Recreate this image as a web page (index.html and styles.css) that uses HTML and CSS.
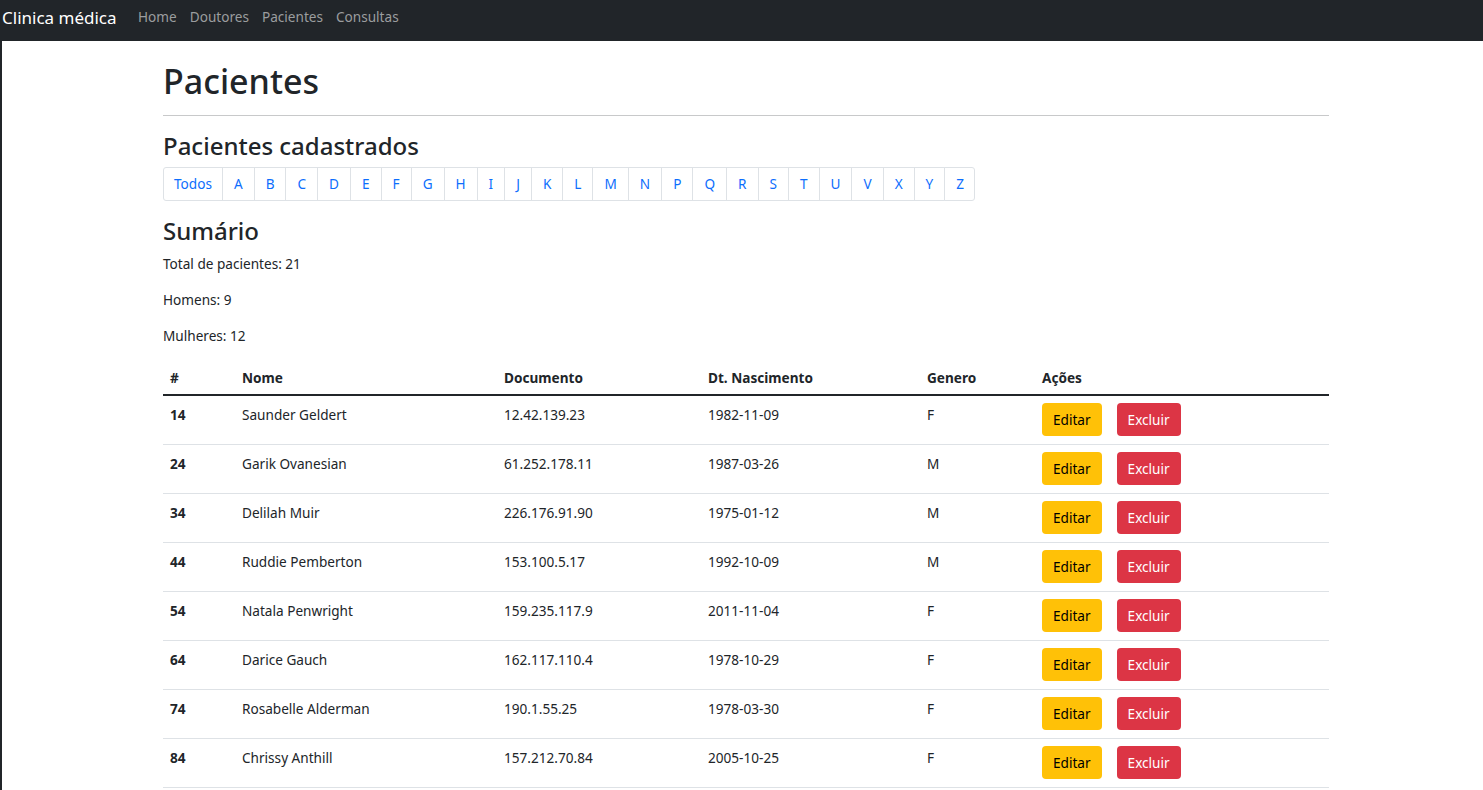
FILE: index.html
```html
<!DOCTYPE html>
<html lang="pt">
<head>
<meta charset="utf-8">
<title>Clinica médica</title>
<link rel="stylesheet" href="styles.css">
</head>
<body>
<nav class="navbar">
  <a class="brand" href="#">Clinica médica</a>
  <ul class="nav">
    <li><a href="#">Home</a></li>
    <li><a href="#">Doutores</a></li>
    <li><a href="#">Pacientes</a></li>
    <li><a href="#">Consultas</a></li>
  </ul>
</nav>
<main class="page">
  <div class="container">
    <h1 class="title">Pacientes</h1>
    <hr class="rule">
    <h3 class="section">Pacientes cadastrados</h3>
    <ul class="pagination">
      <li><a href="#">Todos</a></li>
      <li><a href="#">A</a></li>
      <li><a href="#">B</a></li>
      <li><a href="#">C</a></li>
      <li><a href="#">D</a></li>
      <li><a href="#">E</a></li>
      <li><a href="#">F</a></li>
      <li><a href="#">G</a></li>
      <li><a href="#">H</a></li>
      <li><a href="#">I</a></li>
      <li><a href="#">J</a></li>
      <li><a href="#">K</a></li>
      <li><a href="#">L</a></li>
      <li><a href="#">M</a></li>
      <li><a href="#">N</a></li>
      <li><a href="#">P</a></li>
      <li><a href="#">Q</a></li>
      <li><a href="#">R</a></li>
      <li><a href="#">S</a></li>
      <li><a href="#">T</a></li>
      <li><a href="#">U</a></li>
      <li><a href="#">V</a></li>
      <li><a href="#">X</a></li>
      <li><a href="#">Y</a></li>
      <li><a href="#">Z</a></li>
    </ul>
    <h3 class="section summary-title">Sumário</h3>
    <p class="stat">Total de pacientes: 21</p>
    <p class="stat">Homens: 9</p>
    <p class="stat">Mulheres: 12</p>
    <table class="table">
      <colgroup>
        <col class="c-id"><col class="c-name"><col class="c-doc"><col class="c-date"><col class="c-gen"><col class="c-act">
      </colgroup>
      <thead>
        <tr><th>#</th><th>Nome</th><th>Documento</th><th>Dt. Nascimento</th><th>Genero</th><th>Ações</th></tr>
      </thead>
      <tbody>
        <tr><th>14</th><td>Saunder Geldert</td><td>12.42.139.23</td><td>1982-11-09</td><td>F</td><td><div class="actions"><a class="btn btn-warning" href="#">Editar</a><a class="btn btn-danger" href="#">Excluir</a></div></td></tr>
        <tr><th>24</th><td>Garik Ovanesian</td><td>61.252.178.11</td><td>1987-03-26</td><td>M</td><td><div class="actions"><a class="btn btn-warning" href="#">Editar</a><a class="btn btn-danger" href="#">Excluir</a></div></td></tr>
        <tr><th>34</th><td>Delilah Muir</td><td>226.176.91.90</td><td>1975-01-12</td><td>M</td><td><div class="actions"><a class="btn btn-warning" href="#">Editar</a><a class="btn btn-danger" href="#">Excluir</a></div></td></tr>
        <tr><th>44</th><td>Ruddie Pemberton</td><td>153.100.5.17</td><td>1992-10-09</td><td>M</td><td><div class="actions"><a class="btn btn-warning" href="#">Editar</a><a class="btn btn-danger" href="#">Excluir</a></div></td></tr>
        <tr><th>54</th><td>Natala Penwright</td><td>159.235.117.9</td><td>2011-11-04</td><td>F</td><td><div class="actions"><a class="btn btn-warning" href="#">Editar</a><a class="btn btn-danger" href="#">Excluir</a></div></td></tr>
        <tr><th>64</th><td>Darice Gauch</td><td>162.117.110.4</td><td>1978-10-29</td><td>F</td><td><div class="actions"><a class="btn btn-warning" href="#">Editar</a><a class="btn btn-danger" href="#">Excluir</a></div></td></tr>
        <tr><th>74</th><td>Rosabelle Alderman</td><td>190.1.55.25</td><td>1978-03-30</td><td>F</td><td><div class="actions"><a class="btn btn-warning" href="#">Editar</a><a class="btn btn-danger" href="#">Excluir</a></div></td></tr>
        <tr><th>84</th><td>Chrissy Anthill</td><td>157.212.70.84</td><td>2005-10-25</td><td>F</td><td><div class="actions"><a class="btn btn-warning" href="#">Editar</a><a class="btn btn-danger" href="#">Excluir</a></div></td></tr>
      </tbody>
    </table>
  </div>
</main>
</body>
</html>
```

FILE: styles.css
```css
html, body {
  margin: 0;
  padding: 0;
  overflow: hidden;
}

body {
  font-family: "Noto Sans", "Open Sans", sans-serif;
  font-size: 13.6px;
  line-height: 1.5;
  color: #212529;
  background: #fff;
}

a {
  text-decoration: none;
}

/* Navbar */
.navbar {
  height: 41px;
  background: #212529;
  display: flex;
  align-items: center;
  padding-left: 2px;
  padding-bottom: 6px;
  box-sizing: border-box;
}

.brand {
  color: #fff;
  font-size: 17px;
  margin-right: 15px;
}

.nav {
  list-style: none;
  display: flex;
  margin: 0;
  padding: 0;
}

.nav a {
  display: block;
  padding: 0 6.5px;
  color: #9b9d9f;
  font-size: 13.6px;
}

/* Page */
.page {
  border-left: 2px solid #212529;
  min-height: 749px;
}

.container {
  width: 1166px;
  margin-left: 161px;
}

.title {
  margin: 0;
  padding-top: 20px;
  font-size: 34px;
  font-weight: 500;
  line-height: 1.2;
}

.rule {
  margin: 13px 0 16px;
  border: 0;
  border-top: 1px solid #c8c9ca;
}

.section {
  margin: 0 0 6px;
  font-size: 24px;
  font-weight: 500;
  line-height: 1.2;
}

.summary-title {
  margin-top: 16px;
  margin-bottom: 8px;
}

/* Pagination */
.pagination {
  list-style: none;
  display: flex;
  margin: 0;
  padding: 0;
}

.pagination a {
  display: block;
  height: 34px;
  box-sizing: border-box;
  padding: 0 11px;
  line-height: 32px;
  border: 1px solid #dee2e6;
  margin-left: -1px;
  color: #0d6efd;
  background: #fff;
}

.pagination li:first-child a {
  margin-left: 0;
  padding: 0 10px;
  border-radius: 3px 0 0 3px;
}

.pagination li:last-child a {
  padding-right: 10px;
  border-radius: 0 3px 3px 0;
}

/* Summary */
.stat {
  margin: 0 0 14px;
  line-height: 21.6px;
}

/* Table */
.table {
  width: 100%;
  border-collapse: collapse;
  margin-top: 12px;
}

.c-id { width: 72px; }
.c-name { width: 262px; }
.c-doc { width: 204px; }
.c-date { width: 219px; }
.c-gen { width: 115px; }

.table th,
.table td {
  text-align: left;
  vertical-align: top;
  padding: 7px 7px;
  line-height: 21.6px;
}

.table thead th {
  font-weight: 700;
  padding-bottom: 5px;
  border-bottom: 2px solid #212529;
}

.table tbody th {
  font-weight: 700;
}

.table tbody td,
.table tbody th {
  border-bottom: 1px solid #dee2e6;
  padding-top: 8px;
  padding-bottom: 8px;
}

.actions {
  display: flex;
  gap: 15px;
}

.btn {
  display: inline-block;
  height: 33px;
  line-height: 33px;
  padding: 0 11px;
  border-radius: 4px;
  font-size: 13.6px;
  margin-top: -1px;
}

.btn-warning {
  background: #ffc107;
  color: #000;
}

.btn-danger {
  background: #dc3545;
  color: #fff;
}
```
